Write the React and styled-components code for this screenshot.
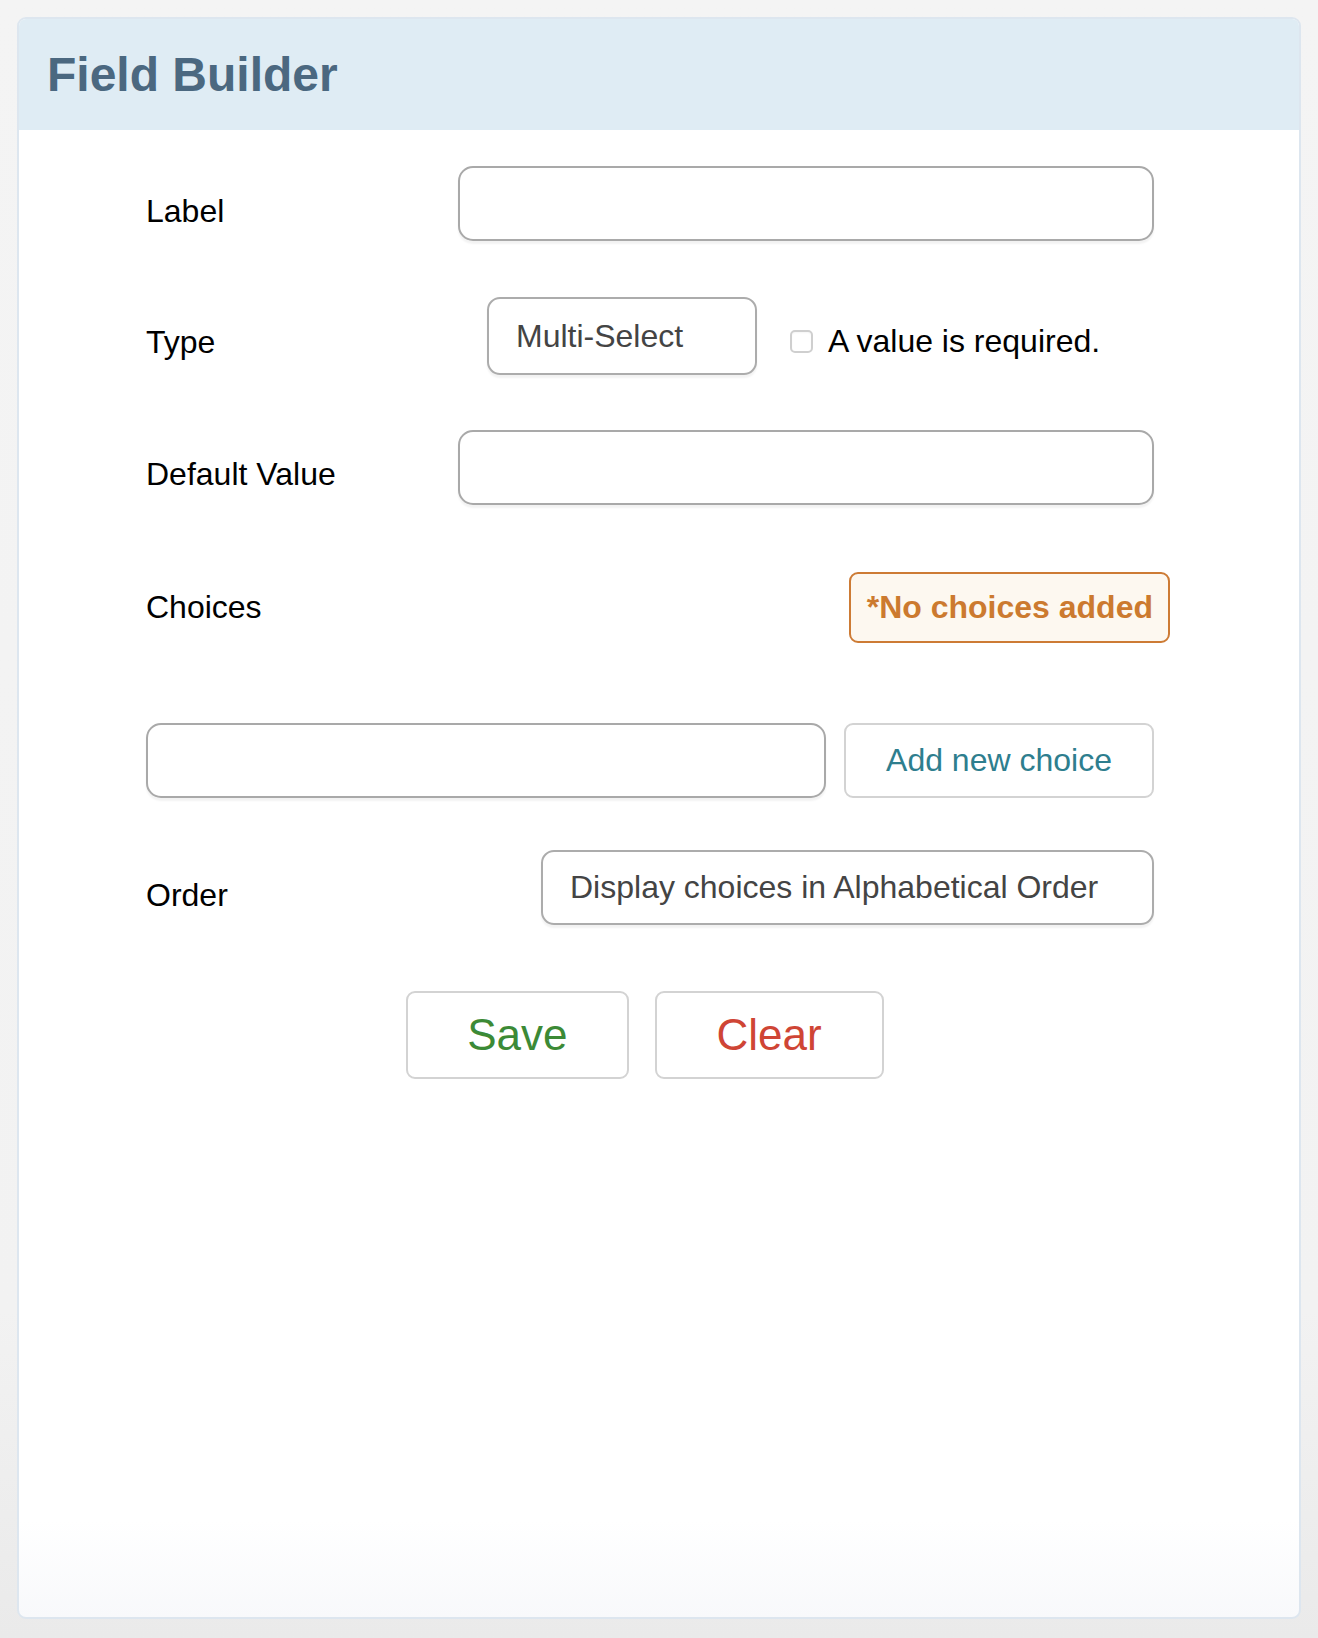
import React, {useState} from 'react'
import styled, {createGlobalStyle} from "styled-components";

const GlobalStyle = createGlobalStyle`
html, body {
  margin: 0;
  padding: 0;
}
body {
  min-height: 1638px;
  background: linear-gradient(to bottom, #f4f4f4 0%, #f2f2f2 80%, #eaeaea 100%);
  font-family: "Liberation Sans", Helvetica, Arial, sans-serif;
}
#root {
  padding: 17px 17px 0 17px;
}
`;

const Panel = styled.div`
height: 1602px;
box-sizing: border-box;
display: flex;
flex-direction: column;
background: linear-gradient(to bottom, #ffffff 0%, #ffffff 94%, #f8f9fb 100%);
border: 2px solid #dde6ef;
border-radius: 9px;
overflow: hidden;
`;

const Header = styled.div`
height: 111px;
display: flex;
align-items: center;
padding-left: 28px;
background: #dfecf4;
`;

const Title = styled.h1`
margin: 0;
font-size: 48px;
font-weight: bold;
color: #4b6880;
`;

const Form = styled.form`
display: flex;
flex-direction: column;
padding: 0 145px 0 127px;
`;

const Row = styled.div`
display: flex;
align-items: center;
margin-top: ${props => props.gap || 0}px;
`;

const Label = styled.label`
width: 312px;
flex-shrink: 0;
padding-top: ${props => props.shift ?? 16}px;
font-size: 32px;
color: #000;
`;

const Field = styled.div`
flex: 1;
display: flex;
align-items: center;
justify-content: ${props => props.start ? "flex-start" : "flex-end"};
padding-left: ${props => props.indent || 0}px;
gap: ${props => props.gap || 0}px;
`;

const TextInput = styled.input`
box-sizing: border-box;
height: 75px;
width: ${props => props.width || "100%"};
flex: ${props => props.grow ? 1 : "none"};
border: 2px solid #a9a9a9;
border-radius: 15px;
box-shadow: 0 3px 2px rgba(0, 0, 0, 0.05);
background: #fff;
font-family: inherit;
font-size: 32px;
padding: 0 24px;
outline: none;
`;

const SelectBox = styled.div`
box-sizing: border-box;
height: ${props => props.height || 75}px;
width: ${props => props.width}px;
display: flex;
align-items: center;
padding-left: 27px;
border: 2px solid #acacac;
border-radius: 13px;
box-shadow: 0 3px 2px rgba(0, 0, 0, 0.05);
font-size: 32px;
color: #444;
white-space: nowrap;
`;

const CheckLabel = styled.label`
display: flex;
align-items: center;
margin-left: 33px;
font-size: 32px;
color: #000;
padding-top: 10px;
`;

const CheckBox = styled.span`
box-sizing: border-box;
width: 23px;
height: 23px;
margin-right: 15px;
border: 2px solid #cfcfcf;
border-radius: 5px;
background: #fff;
box-shadow: inset 0 1px 2px rgba(0, 0, 0, 0.04);
`;

const Badge = styled.div`
box-sizing: border-box;
height: 71px;
display: flex;
align-items: center;
padding: 0 15px 0 16px;
margin-right: -16px;
border: 2px solid #cd7b35;
border-radius: 9px;
background: #fdf8f0;
color: #cc7a2f;
font-size: 32px;
font-weight: bold;
white-space: nowrap;
`;

const LightButton = styled.button`
box-sizing: border-box;
height: ${props => props.height || 75}px;
width: ${props => props.width ? props.width + "px" : "auto"};
padding: ${props => props.pad || "0"};
border: 2px solid #d3d3d3;
border-radius: 9px;
background: #fff;
font-family: inherit;
font-size: ${props => props.size || 32}px;
color: ${props => props.color};
cursor: pointer;
white-space: nowrap;
`;

const Buttons = styled.div`
display: flex;
justify-content: center;
gap: 26px;
margin-top: 66px;
padding-right: 10px;
`;

export default function App() {
  const [label, setLabel] = useState("");
  const [defaultValue, setDefaultValue] = useState("");
  const [choice, setChoice] = useState("");

  return <>
    <GlobalStyle/>
    <Panel>
      <Header>
        <Title>Field Builder</Title>
      </Header>
      <Form onSubmit={e => e.preventDefault()}>
        <Row gap={36}>
          <Label>Label</Label>
          <Field>
            <TextInput value={label} onChange={e => setLabel(e.target.value)}/>
          </Field>
        </Row>
        <Row gap={56}>
          <Label shift={12}>Type</Label>
          <Field start indent={29}>
            <SelectBox width={270} height={78}>Multi-Select</SelectBox>
            <CheckLabel>
              <CheckBox/>
              A value is required.
            </CheckLabel>
          </Field>
        </Row>
        <Row gap={55}>
          <Label shift={14}>Default Value</Label>
          <Field>
            <TextInput value={defaultValue} onChange={e => setDefaultValue(e.target.value)}/>
          </Field>
        </Row>
        <Row gap={67}>
          <Label shift={0}>Choices</Label>
          <Field>
            <Badge>*No choices added</Badge>
          </Field>
        </Row>
        <Row gap={80}>
          <Field gap={18}>
            <TextInput grow value={choice} onChange={e => setChoice(e.target.value)}/>
            <LightButton width={310} color="#2e7e8e">Add new choice</LightButton>
          </Field>
        </Row>
        <Row gap={52}>
          <Label shift={16}>Order</Label>
          <Field>
            <SelectBox width={613}>Display choices in Alphabetical Order</SelectBox>
          </Field>
        </Row>
        <Buttons>
          <LightButton height={88} pad="0 59px" size={44} color="#3c8a36">Save</LightButton>
          <LightButton height={88} pad="0 60px" size={44} color="#cf4535">Clear</LightButton>
        </Buttons>
      </Form>
    </Panel>
  </>;
}
